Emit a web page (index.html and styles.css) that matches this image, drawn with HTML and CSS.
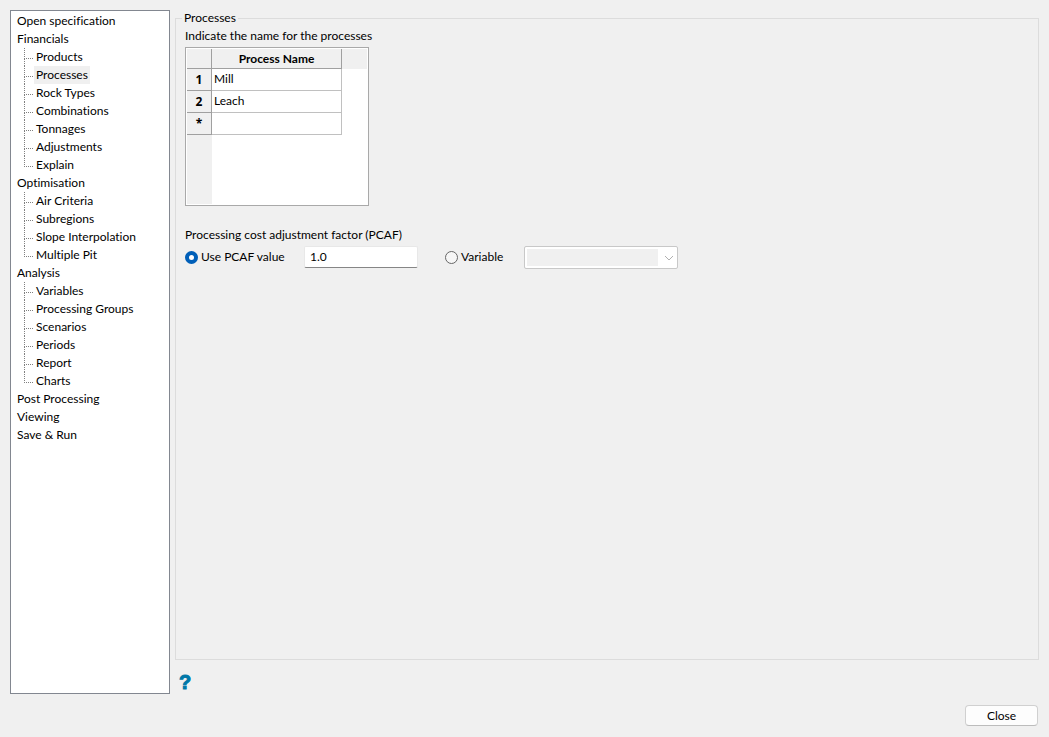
FILE: index.html
```html
<!DOCTYPE html>
<html lang="en">
<head>
    <meta charset="UTF-8">
    <meta name="viewport" content="width=device-width, initial-scale=1.0">
    <title>Processes</title>
    <link rel="stylesheet" href="styles.css">
</head>
<body>
    <div class="content">
        <nav class="tree" aria-label="Sections">
            <ul>
                <li><a href="#">Open specification</a></li>
                <li><a href="#">Financials</a>
                    <ul class="branch">
                        <li><a href="#">Products</a></li>
                        <li><a href="#" class="selected">Processes</a></li>
                        <li><a href="#">Rock Types</a></li>
                        <li><a href="#">Combinations</a></li>
                        <li><a href="#">Tonnages</a></li>
                        <li><a href="#">Adjustments</a></li>
                        <li><a href="#">Explain</a></li>
                    </ul>
                </li>
                <li><a href="#">Optimisation</a>
                    <ul class="branch">
                        <li><a href="#">Air Criteria</a></li>
                        <li><a href="#">Subregions</a></li>
                        <li><a href="#">Slope Interpolation</a></li>
                        <li><a href="#">Multiple Pit</a></li>
                    </ul>
                </li>
                <li><a href="#">Analysis</a>
                    <ul class="branch">
                        <li><a href="#">Variables</a></li>
                        <li><a href="#">Processing Groups</a></li>
                        <li><a href="#">Scenarios</a></li>
                        <li><a href="#">Periods</a></li>
                        <li><a href="#">Report</a></li>
                        <li><a href="#">Charts</a></li>
                    </ul>
                </li>
                <li><a href="#">Post Processing</a></li>
                <li><a href="#">Viewing</a></li>
                <li><a href="#">Save &amp; Run</a></li>
            </ul>
        </nav>

        <main class="panel">
            <fieldset class="group">
                <legend>Processes</legend>
                <p id="gridLabel">Indicate the name for the processes</p>
                <div class="grid">
                    <table aria-labelledby="gridLabel">
                        <thead>
                            <tr><th class="num"></th><th class="name">Process Name</th><th class="filler"></th></tr>
                        </thead>
                        <tbody>
                            <tr><th>1</th><td>Mill</td><td class="empty"></td></tr>
                            <tr><th>2</th><td>Leach</td><td class="empty"></td></tr>
                            <tr><th>*</th><td></td><td class="empty"></td></tr>
                            <tr class="rest"><th></th><td class="empty"></td><td class="empty"></td></tr>
                        </tbody>
                    </table>
                </div>

                <p>Processing cost adjustment factor (PCAF)</p>
                <div class="pcaf">
                    <label class="option value-option"><input type="radio" name="pcaf" checked>Use PCAF value</label>
                    <input type="text" class="value" value="1.0" aria-label="PCAF value">
                    <label class="option variable-option"><input type="radio" name="pcaf">Variable</label>
                    <div class="combo">
                        <select aria-label="PCAF variable" disabled></select>
                        <svg class="arrow" viewBox="0 0 10 6" aria-hidden="true"><path d="M1 1l4 4 4-4"/></svg>
                    </div>
                </div>
            </fieldset>
            <button class="help" aria-label="Help">?</button>
        </main>
    </div>

    <footer>
        <button class="close">Close</button>
    </footer>
</body>
</html>
```

FILE: styles.css
```css
* {
    box-sizing: border-box;
}

body {
    display: flex;
    flex-direction: column;
    gap: 11px;
    min-height: 100vh;
    margin: 0;
    padding: 10px 10px 11px 10px;
    background-color: #f0f0f0;
    color: #000;
    font-family: Lato, "Open Sans", sans-serif;
    font-size: 12px;
    font-variant-ligatures: none;
    line-height: 18px;
}

p {
    margin: 0;
}

input, select, button {
    font: inherit;
    color: inherit;
}

.content {
    display: flex;
    flex: 1;
    gap: 5px;
}

/* section tree */
.tree {
    flex: 0 0 160px;
    padding: 1px 6px;
    border: 1px solid #828790;
    background-color: #fff;
    white-space: nowrap;
}

.tree ul {
    margin: 0;
    padding: 0;
    list-style: none;
}

.tree a {
    display: block;
    color: #000;
    text-decoration: none;
}

.tree .branch {
    padding-left: 7px;
}

.branch li {
    display: flex;
    position: relative;
    padding-left: 10px;
}

.branch li::before {
    content: "";
    position: absolute;
    top: 0;
    left: 0;
    width: 8px;
    height: 10px;
    border-left: 1px dotted #808080;
    border-bottom: 1px dotted #808080;
}

.branch li:not(:last-child)::after {
    content: "";
    position: absolute;
    top: 11px;
    bottom: 0;
    left: 0;
    border-left: 1px dotted #808080;
}

.branch a {
    padding: 0 2px;
}

.branch .selected {
    background-color: #f0f0f0;
}

/* main panel */
.panel {
    display: flex;
    flex: 1;
    flex-direction: column;
    min-width: 0;
}

.group {
    flex: 1;
    min-width: 0;
    margin: 0;
    padding: 1px 9px;
    border: 1px solid #dcdcdc;
}

.group legend {
    margin-left: -3px;
    padding: 0 2px;
    line-height: 16px;
}

.grid {
    width: 184px;
    height: 159px;
    margin: 2px 0 20px;
    padding: 1px;
    border: 1px solid #a9a9a9;
    background-color: #fff;
}

.grid table {
    width: 100%;
    height: 100%;
    table-layout: fixed;
    border-collapse: separate;
    border-spacing: 0;
}

.grid th {
    padding: 0;
    border-right: 1px solid #a0a0a0;
    border-bottom: 1px solid #a0a0a0;
    background-color: #f0f0f0;
    line-height: 16px;
}

.grid tbody th {
    font-family: "Open Sans", sans-serif;
}

.grid td {
    padding: 0 2px 2px;
    border-right: 1px solid #c0c0c0;
    border-bottom: 1px solid #c0c0c0;
    line-height: 16px;
}

.grid thead tr {
    height: 20px;
}

.grid tbody tr {
    height: 22px;
}

.grid .num {
    width: 25px;
}

.grid .name {
    width: 130px;
}

.grid .filler,
.grid .empty,
.grid .rest th {
    border: none;
}

.grid tbody .rest {
    height: auto;
}

.pcaf {
    display: flex;
    align-items: center;
    height: 26px;
}

.option {
    display: flex;
    align-items: center;
    gap: 3px;
}

.option input {
    appearance: none;
    width: 13px;
    height: 13px;
    margin: 0;
    border: 1px solid #666;
    border-radius: 50%;
    background-color: #f6f6f6;
}

.option input:checked {
    border: 4px solid #005fb8;
    background-color: #fff;
}

.value-option {
    width: 119px;
}

.variable-option {
    width: 79px;
}

.value {
    width: 114px;
    height: 22px;
    margin-right: 27px;
    padding: 0 5px 1px;
    border: 1px solid #e8e8e8;
    border-bottom-color: #868686;
    border-radius: 2px;
    background-color: #fff;
}

.combo {
    position: relative;
    width: 154px;
}

.combo select {
    display: block;
    appearance: none;
    width: 100%;
    height: 23px;
    padding: 0;
    border: 1px solid #c8c8c8;
    border-radius: 2px;
    background-color: #fff;
    box-shadow: inset 0 0 0 2px #fff, inset -19px 0 0 #fff, inset 0 0 0 20px #f0f0f0;
    opacity: 1;
}

.combo .arrow {
    position: absolute;
    top: 9px;
    right: 4px;
    width: 10px;
    height: 6px;
    fill: none;
    stroke: #b0b0b0;
}

.help {
    align-self: flex-start;
    height: 34px;
    padding: 10px 4px 0;
    border: none;
    background: none;
    color: #0078a8;
    font-family: "Liberation Sans", sans-serif;
    font-size: 20px;
    font-weight: bold;
    line-height: 24px;
    -webkit-text-stroke: 1px #0078a8;
}

footer {
    display: flex;
    justify-content: flex-end;
    padding-right: 1px;
}

.close {
    width: 73px;
    height: 21px;
    padding: 0;
    border: 1px solid #d0d0d0;
    border-bottom-color: #bcbcbc;
    border-radius: 4px;
    background-color: #fdfdfd;
    line-height: 18px;
}
```
